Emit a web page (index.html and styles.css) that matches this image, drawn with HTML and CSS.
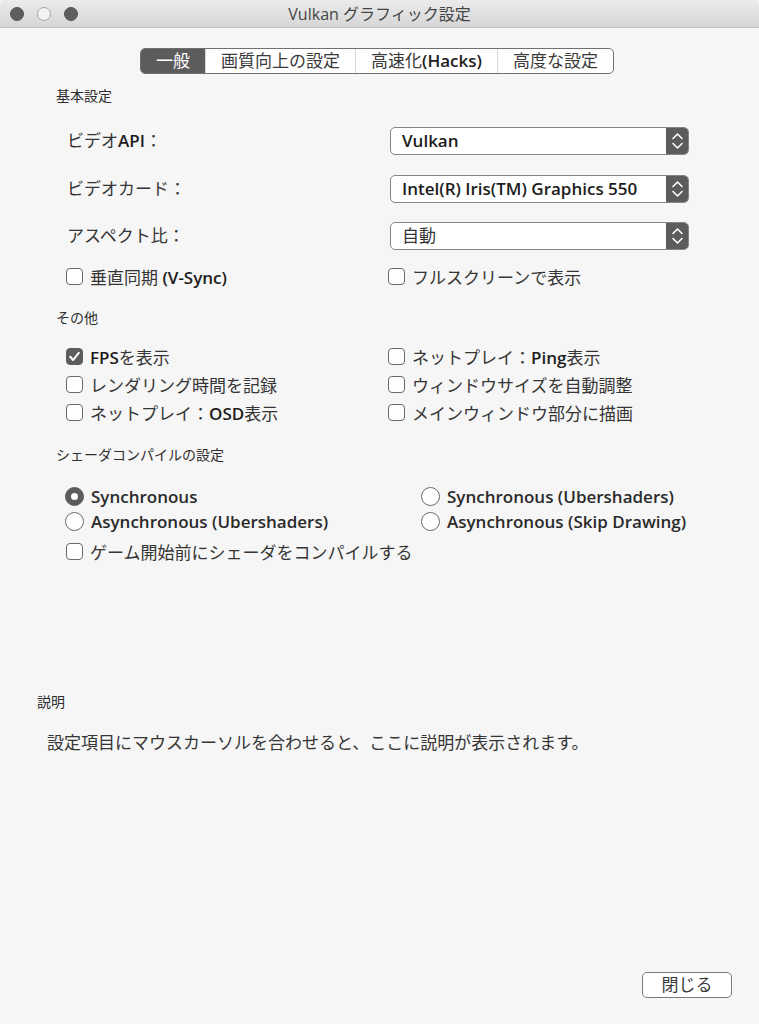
FILE: index.html
```html
<!DOCTYPE html>
<html lang="ja">
<head>
<meta charset="utf-8">
<title>Vulkan グラフィック設定</title>
<link rel="stylesheet" href="styles.css">
</head>
<body>
<div class="window">
  <header class="titlebar">
    <div class="lights">
      <span class="light dark"></span>
      <span class="light hollow"></span>
      <span class="light dark"></span>
    </div>
    <div class="title">Vulkan グラフィック設定</div>
    <div></div>
  </header>

  <main class="content">
    <nav class="tabs">
      <span class="tab active">一般</span>
      <span class="tab">画質向上の設定</span>
      <span class="tab">高速化<b class="lat">(Hacks)</b></span>
      <span class="tab">高度な設定</span>
    </nav>

    <h2 class="group-title">基本設定</h2>
    <div class="fields">
      <div class="field">
        <span class="field-label">ビデオ<b class="lat">API</b>：</span>
        <div class="select">
          <span class="select-value lat">Vulkan</span>
          <span class="select-arrows"><svg viewBox="0 0 22 26" width="22" height="26"><path d="M7 10.5 L11.5 6 L16 10.5 M7 15.5 L11.5 20 L16 15.5" fill="none" stroke="#fff" stroke-width="1.6" stroke-linecap="round" stroke-linejoin="round"/></svg></span>
        </div>
      </div>
      <div class="field">
        <span class="field-label">ビデオカード：</span>
        <div class="select">
          <span class="select-value lat">Intel(R) Iris(TM) Graphics 550</span>
          <span class="select-arrows"><svg viewBox="0 0 22 26" width="22" height="26"><path d="M7 10.5 L11.5 6 L16 10.5 M7 15.5 L11.5 20 L16 15.5" fill="none" stroke="#fff" stroke-width="1.6" stroke-linecap="round" stroke-linejoin="round"/></svg></span>
        </div>
      </div>
      <div class="field">
        <span class="field-label">アスペクト比：</span>
        <div class="select">
          <span class="select-value">自動</span>
          <span class="select-arrows"><svg viewBox="0 0 22 26" width="22" height="26"><path d="M7 10.5 L11.5 6 L16 10.5 M7 15.5 L11.5 20 L16 15.5" fill="none" stroke="#fff" stroke-width="1.6" stroke-linecap="round" stroke-linejoin="round"/></svg></span>
        </div>
      </div>
    </div>
    <div class="checks single">
      <label class="check"><span class="box"></span><span>垂直同期 <b class="lat">(V-Sync)</b></span></label>
      <label class="check right"><span class="box"></span><span>フルスクリーンで表示</span></label>
    </div>

    <h2 class="group-title other">その他</h2>
    <div class="checks multi">
      <label class="check"><span class="box checked"><svg viewBox="0 0 17 17" width="17" height="17"><path d="M4.2 8.8 L7.2 12 L12.8 4.8" fill="none" stroke="#fff" stroke-width="2" stroke-linecap="round" stroke-linejoin="round"/></svg></span><span><b class="lat">FPS</b>を表示</span></label>
      <label class="check right"><span class="box"></span><span>ネットプレイ：<b class="lat">Ping</b>表示</span></label>
      <label class="check"><span class="box"></span><span>レンダリング時間を記録</span></label>
      <label class="check right"><span class="box"></span><span>ウィンドウサイズを自動調整</span></label>
      <label class="check"><span class="box"></span><span>ネットプレイ：<b class="lat">OSD</b>表示</span></label>
      <label class="check right"><span class="box"></span><span>メインウィンドウ部分に描画</span></label>
    </div>

    <h2 class="group-title shader">シェーダコンパイルの設定</h2>
    <div class="radios">
      <label class="radio"><span class="dot selected"></span><span class="lat-m">Synchronous</span></label>
      <label class="radio"><span class="dot"></span><span class="lat-m">Synchronous (Ubershaders)</span></label>
      <label class="radio"><span class="dot"></span><span class="lat-m">Asynchronous (Ubershaders)</span></label>
      <label class="radio"><span class="dot"></span><span class="lat-m">Asynchronous (Skip Drawing)</span></label>
    </div>
    <div class="checks compile">
      <label class="check"><span class="box"></span><span>ゲーム開始前にシェーダをコンパイルする</span></label>
    </div>

    <h2 class="desc-title">説明</h2>
    <p class="desc">設定項目にマウスカーソルを合わせると、ここに説明が表示されます。</p>
  </main>

  <footer class="footer">
    <button class="btn">閉じる</button>
  </footer>
</div>
</body>
</html>
```

FILE: styles.css
```css
* { box-sizing: border-box; }

html, body {
  margin: 0;
  padding: 0;
  background: #f6f6f6;
}

body {
  font-family: "Open Sans", "Noto Sans CJK JP", sans-serif;
  font-size: 17px;
  color: #353535;
}

.window {
  width: 759px;
  height: 1024px;
  display: flex;
  flex-direction: column;
  background: #f6f6f6;
  border-radius: 5px 5px 0 0;
  overflow: hidden;
}

.titlebar {
  height: 28px;
  flex: none;
  display: grid;
  grid-template-columns: 1fr auto 1fr;
  align-items: center;
  background: linear-gradient(#ebebeb, #d6d6d6);
  border-bottom: 1px solid #bdbdbd;
}

.lights {
  display: flex;
  gap: 13px;
  padding-left: 10px;
}

.light {
  width: 14px;
  height: 14px;
  border-radius: 50%;
}

.light.dark {
  background: #5e5e5e;
  border: 1px solid #555;
}

.light.hollow {
  background: #f3f3f3;
  border: 1px solid #a9a9a9;
}

.title {
  font-size: 16px;
  color: #454545;
  line-height: 20px;
}

.content {
  flex: 1;
  display: flex;
  flex-direction: column;
}

.tabs {
  align-self: center;
  margin-top: 20px;
  margin-left: -5px;
  height: 26px;
  display: flex;
  border: 1px solid #707070;
  border-radius: 5px;
  background: #fff;
  overflow: hidden;
}

.tab {
  padding: 0 15px;
  line-height: 24px;
  color: #3a3a3a;
  border-left: 1px solid #d8d8d8;
}

.tab:first-child { border-left: none; }

.tab.active {
  background: #5c5c5c;
  color: #fff;
}

.lat { font-weight: 600; color: #1c1c1c; }
.tab.active .lat { color: #fff; }
.lat-m { font-weight: 600; color: #2a2a2a; }

.group-title {
  margin: 12px 0 0 56px;
  font-size: 14px;
  line-height: 20px;
  font-weight: 400;
  color: #2e2e2e;
}

.group-title.other { margin-top: 18px; }
.group-title.shader { margin-top: 19px; }

.fields {
  margin: 21px 0 0 67px;
  display: flex;
  flex-direction: column;
  gap: 19.5px;
}

.field {
  display: grid;
  grid-template-columns: 323px 299px;
  align-items: center;
  height: 28px;
}

.field-label { line-height: 28px; }

.select {
  height: 28px;
  display: flex;
  align-items: stretch;
  background: #fff;
  border: 1px solid #858585;
  border-radius: 5px;
  overflow: hidden;
}

.select-value {
  flex: 1;
  padding-left: 11px;
  line-height: 26px;
}

.select-arrows {
  width: 22px;
  background: #5c5c5c;
  display: flex;
}

.checks {
  margin-left: 66px;
  display: grid;
  grid-template-columns: 322px 1fr;
}

.checks.single { margin-top: 12px; }
.checks.multi { margin-top: 14px; }
.checks.compile {
  margin-top: 3px;
  grid-template-columns: 1fr;
}

.check {
  height: 28px;
  display: flex;
  align-items: center;
  gap: 7px;
  white-space: nowrap;
}

.box {
  width: 17px;
  height: 17px;
  flex: none;
  border: 1px solid #6a6a6a;
  border-radius: 4px;
  background: #fff;
  display: flex;
}

.box.checked {
  background: #5c5c5c;
  border-color: #5c5c5c;
}

.box svg { margin: -1px; }

.radios {
  margin: 19px 0 0 65px;
  display: grid;
  grid-template-columns: 356px 1fr;
}

.radio {
  height: 25px;
  display: flex;
  align-items: center;
  gap: 7px;
  white-space: nowrap;
}

.dot {
  width: 19px;
  height: 19px;
  flex: none;
  border-radius: 50%;
  border: 1px solid #6a6a6a;
  background: #fff;
  display: flex;
  align-items: center;
  justify-content: center;
}

.dot.selected {
  background: #5c5c5c;
  border-color: #5c5c5c;
}

.dot.selected::after {
  content: "";
  width: 7px;
  height: 7px;
  border-radius: 50%;
  background: #fff;
}

.desc-title {
  margin: 127px 0 0 37px;
  font-size: 14px;
  line-height: 20px;
  font-weight: 400;
  color: #2e2e2e;
}

.desc {
  margin: 19px 0 0 47px;
  line-height: 24px;
}

.footer {
  flex: none;
  display: flex;
  justify-content: flex-end;
  padding: 0 27px 26px 0;
}

.btn {
  width: 90px;
  height: 26px;
  padding: 0;
  font: inherit;
  line-height: 24px;
  color: #3a3a3a;
  background: #fff;
  border: 1px solid #7a7a7a;
  border-radius: 5px;
}
```
